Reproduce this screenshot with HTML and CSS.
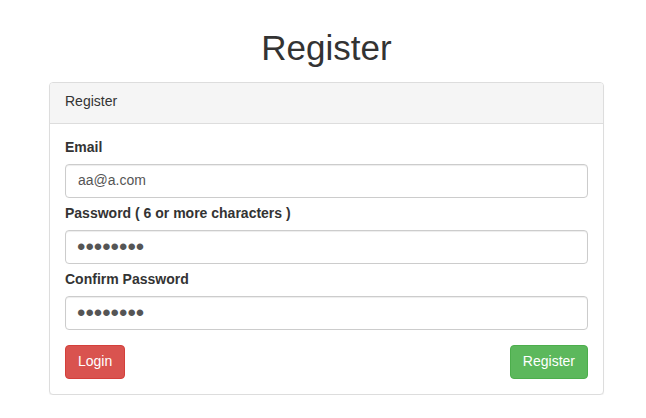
FILE: index.html
```html
<!DOCTYPE html>
<html lang="en">
<head>
<meta charset="utf-8">
<title>Register</title>
<link rel="stylesheet" href="styles.css">
</head>
<body>
<div class="page">
  <h1 class="title">Register</h1>
  <div class="panel">
    <div class="panel-heading">Register</div>
    <form class="panel-body" onsubmit="return false">
      <div class="form-group">
        <label class="label" for="email">Email</label>
        <input class="input" id="email" type="email" value="aa@a.com">
      </div>
      <div class="form-group">
        <label class="label" for="pw">Password ( 6 or more characters )</label>
        <input class="input input-password" id="pw" type="password" value="12345678">
      </div>
      <div class="form-group">
        <label class="label" for="pw2">Confirm Password</label>
        <input class="input input-password" id="pw2" type="password" value="12345678">
      </div>
      <div class="actions">
        <button class="btn btn-danger" type="button">Login</button>
        <button class="btn btn-success" type="submit">Register</button>
      </div>
    </form>
  </div>
</div>
</body>
</html>
```
FILE: styles.css
```css
* { box-sizing: border-box; }
html, body { margin: 0; padding: 0; background: #fff; }
body {
  font-family: "Liberation Sans", Arial, Helvetica, sans-serif;
  font-size: 14px;
  line-height: 20px;
  color: #333;
}
.page {
  width: 555px;
  margin-left: 49px;
  padding-top: 29px;
}
.title {
  margin: 0 0 15px;
  font-size: 35px;
  line-height: 38px;
  font-weight: 500;
  text-align: center;
  color: #333;
}
.panel {
  border: 1px solid #ddd;
  border-radius: 4px;
  background: #fff;
  box-shadow: 0 1px 1px rgba(0,0,0,.05);
}
.panel-heading {
  padding: 8px 15px 12px;
  background: #f5f5f5;
  border-bottom: 1px solid #ddd;
  border-radius: 3px 3px 0 0;
  color: #333;
}
.panel-body {
  padding: 13px 15px 15px;
  margin: 0;
}
.form-group { margin-bottom: 5px; }
.label {
  display: block;
  font-weight: bold;
  margin-bottom: 7px;
}
.input {
  display: block;
  width: 100%;
  height: 34px;
  padding: 5px 12px 7px;
  font-family: inherit;
  font-size: 14px;
  line-height: 20px;
  color: #555;
  background: #fff;
  border: 1px solid #ccc;
  border-radius: 4px;
  box-shadow: inset 0 1px 1px rgba(0,0,0,.075);
  outline: none;
}
.input-password {
  font-size: 24px;
  padding: 4px 11px;
  line-height: 24px;
}
.actions {
  display: flex;
  justify-content: space-between;
  margin-top: 15px;
}
.btn {
  height: 34px;
  padding: 5px 12px 7px;
  font-family: inherit;
  font-size: 14px;
  line-height: 20px;
  color: #fff;
  border: 1px solid transparent;
  border-radius: 4px;
  cursor: pointer;
}
.btn-danger { background: #d9534f; border-color: #d43f3a; }
.btn-success { background: #5cb85c; border-color: #4cae4c; }
```
